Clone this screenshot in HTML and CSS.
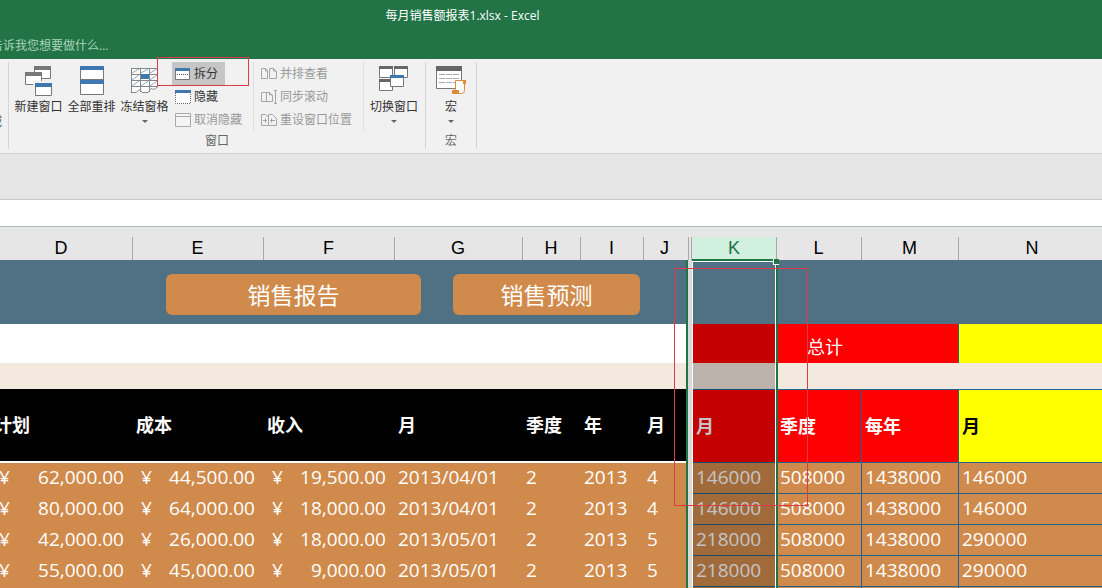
FILE: index.html
```html
<!DOCTYPE html>
<html lang="zh-CN">
<head>
<meta charset="utf-8">
<title>每月销售额报表1.xlsx - Excel</title>
<link rel="stylesheet" href="styles.css">
</head>
<body>
<header class="titlebar">
  <h1 class="title">每月销售额报表1.xlsx - Excel</h1>
  <button class="tellme">告诉我您想要做什么...</button>
</header>

<nav class="ribbon">
  <div class="zoom-tail"><span>域</span></div>
  <section class="group group-window">
    <div class="tools">
      <button class="big">
        <svg width="32" height="34" viewBox="0 0 32 34"><g fill="#fff" stroke="#777"><path d="M11.500 3.500h16v12h-16z"/><path d="M2.500 9.500h16v12h-16z"/></g><path fill="#777" d="M11 3h17v4H11zM2 9h17v4H2z"/><path fill="#fff" stroke="#f0f0f0" stroke-width="2" d="M11 19h19v15H11z"/><path fill="#fff" stroke="#777" d="M12.500 20.500h16v12h-16z"/><path fill="#3f78ae" d="M12 20h17v4H12z"/></svg>
        <span>新建窗口</span>
      </button>
      <button class="big">
        <svg width="32" height="34" viewBox="0 0 32 34"><path fill="#fff" stroke="#777" d="M4.500 3.500h23v28h-23z"/><path fill="#3f78ae" d="M4 3h24v4H4zM4 17h24v4H4z"/><path stroke="#777" d="M4 16.500h24"/></svg>
        <span>全部重排</span>
      </button>
      <button class="big">
        <svg width="32" height="34" viewBox="0 0 32 34"><path fill="#fff" d="M2 5h27v19l-7 5H2z"/><path fill="none" stroke="#888" d="M2.500 5v24M11.500 5v24M20.500 5v24M28.500 5v19M2 5.500h27M2 11.500h27M2 17.500h27M2 23.500h27M2 29.500h5l4-3 2 3h6l3-4 3 1 4-3"/><path stroke="#8da7bf" d="M3 10l7-4M12 10l7-4M21 10l7-4M3 17l7-5M3 23l7-5M21 17l7-5M12 23l7-5M21 23l7-5"/><path fill="#3f78ae" d="M12 11h8v5h-8z"/></svg>
        <span>冻结窗格</span><i class="caret"></i>
      </button>
      <div class="stack">
        <button class="small on">
          <svg width="16" height="14" viewBox="0 0 16 14"><path fill="#fff" stroke="#777" d="M.5 1.500h14v11H.5z"/><path fill="#3f78ae" d="M0 1h15v3H0z"/><path stroke="#555" stroke-dasharray="1 1" d="M2 7.500h11"/></svg>
          <span>拆分</span>
        </button>
        <button class="small">
          <svg width="16" height="14" viewBox="0 0 16 14"><path fill="#fff" d="M0 0h16v14H0z"/><path fill="none" stroke="#666" stroke-dasharray="1 1" d="M.5 3v10.500h15V3"/><path fill="#3f78ae" d="M0 0h16v3H0z"/></svg>
          <span>隐藏</span>
        </button>
        <button class="small" disabled>
          <svg width="16" height="14" viewBox="0 0 16 14"><path fill="#f4f4f4" stroke="#aaa" d="M.5.500h15v13H.5zM0 3.500h16"/></svg>
          <span>取消隐藏</span>
        </button>
      </div>
      <div class="stack second">
        <button class="small" disabled>
          <svg width="16" height="14" viewBox="0 0 16 14"><path fill="none" stroke="#a5a5a5" d="M.5 1.500h4l2 2v8h-6zM8.500 1.500h4l3 3v7h-7zM4.500 1v3h2M12.500 1v3h3"/></svg>
          <span>并排查看</span>
        </button>
        <button class="small" disabled>
          <svg width="16" height="14" viewBox="0 0 16 14"><path fill="none" stroke="#a5a5a5" d="M.5 2.500h5v9h-5zM5.500 2.500h3l3 3v6h-6M8.500 2v3h3M13 .5h3M13 13.500h3M14.500 1v12"/></svg>
          <span>同步滚动</span>
        </button>
        <button class="small" disabled>
          <svg width="16" height="14" viewBox="0 0 16 14"><path fill="none" stroke="#a5a5a5" d="M.5 1.500h4l3 3v8h-7zM7.500 4.500v-3h4l4 4v7h-8M2 7.500h4M9 7.500h5M4.500 5.500v4M10.500 5.500v4"/></svg>
          <span>重设窗口位置</span>
        </button>
      </div>
      <button class="big switch">
        <svg width="32" height="34" viewBox="0 0 32 34"><g fill="#fff" stroke="#777"><path d="M1.500 3.500h13v11h-13z"/><path d="M16.500 3.500h13v11h-13z"/><path d="M1.500 16.500h13v11h-13z"/></g><path fill="#666" d="M1 3h14v3H1zM16 3h14v3H16zM1 16h14v3H1z"/><path fill="#fff" stroke="#777" d="M12.500 12.500h13v11h-13z"/><path fill="#3f78ae" d="M12 12h14v3H12z"/></svg>
        <span>切换窗口</span><i class="caret"></i>
      </button>
    </div>
    <div class="caption">窗口</div>
  </section>
  <section class="group group-macro">
    <div class="tools">
      <button class="big">
        <svg width="32" height="34" viewBox="0 0 32 34"><path fill="#fff" stroke="#777" d="M1.500 3.500h25v22h-25z"/><path fill="#666" d="M1 3h26v5H1z"/><path stroke="#aaa" stroke-dasharray="6 1" d="M4 11.500h20M4 15.500h20M4 19.500h16"/><path fill="#fff" stroke="#e08a3c" d="M20.500 17.500h9v10q0 3-3 3h-9v-3h3z"/><path fill="#e08a3c" d="M17 27h7v4h-5q-2 0-2-4zM28 17h3v4h-3z"/></svg>
        <span>宏</span><i class="caret"></i>
      </button>
    </div>
    <div class="caption">宏</div>
  </section>
  <div class="mark mark-split"></div>
</nav>
<div class="spacer"></div>
<div class="formula"></div>

<main class="sheet">
  <table class="cells">
    <colgroup><col class="cD"><col class="cE"><col class="cE"><col class="cG"><col class="cH"><col class="cI"><col class="cJ"><col class="cS"><col class="cK"><col class="cL"><col class="cM"><col></colgroup>
    <thead>
      <tr class="letters"><th>D</th><th>E</th><th>F</th><th>G</th><th>H</th><th>I</th><th>J</th><th class="edge"></th><th class="picked">K</th><th>L</th><th>M</th><th>N</th></tr>
    </thead>
    <tbody>
      <tr class="banner"><td colspan="7"><div class="links"><button class="report">销售报告</button><button class="forecast">销售预测</button></div></td><td></td><td></td><td colspan="3"></td></tr>
      <tr class="total"><td colspan="7"></td><td></td><td colspan="3" class="red">总计</td><td class="yellow line"></td></tr>
      <tr class="gap"><td colspan="12"></td></tr>
      <tr class="heads"><th>计划</th><th>成本</th><th>收入</th><th>月</th><th>季度</th><th>年</th><th>月</th><th></th><th class="red">月</th><th class="red">季度</th><th class="red line">每年</th><th class="yellow line">月</th></tr>
      <tr class="data"><td><div class="money"><span>¥</span><span>62,000.00</span></div></td><td><div class="money"><span>¥</span><span>44,500.00</span></div></td><td><div class="money"><span>¥</span><span>19,500.00</span></div></td><td>2013/04/01</td><td>2</td><td>2013</td><td>4</td><td></td><td class="rule">146000</td><td class="rule">508000</td><td class="rule line">1438000</td><td class="rule line">146000</td></tr>
      <tr class="data"><td><div class="money"><span>¥</span><span>80,000.00</span></div></td><td><div class="money"><span>¥</span><span>64,000.00</span></div></td><td><div class="money"><span>¥</span><span>18,000.00</span></div></td><td>2013/04/01</td><td>2</td><td>2013</td><td>4</td><td></td><td class="rule">146000</td><td class="rule">508000</td><td class="rule line">1438000</td><td class="rule line">146000</td></tr>
      <tr class="data"><td><div class="money"><span>¥</span><span>42,000.00</span></div></td><td><div class="money"><span>¥</span><span>26,000.00</span></div></td><td><div class="money"><span>¥</span><span>18,000.00</span></div></td><td>2013/05/01</td><td>2</td><td>2013</td><td>5</td><td></td><td class="rule">218000</td><td class="rule">508000</td><td class="rule line">1438000</td><td class="rule line">290000</td></tr>
      <tr class="data"><td><div class="money"><span>¥</span><span>55,000.00</span></div></td><td><div class="money"><span>¥</span><span>45,000.00</span></div></td><td><div class="money"><span>¥</span><span>9,000.00</span></div></td><td>2013/05/01</td><td>2</td><td>2013</td><td>5</td><td></td><td class="rule">218000</td><td class="rule">508000</td><td class="rule line">1438000</td><td class="rule line">290000</td></tr>
      <tr class="data"><td></td><td></td><td></td><td></td><td></td><td></td><td></td><td></td><td></td><td></td><td class="line"></td><td class="line"></td></tr>
    </tbody>
  </table>
  <div class="split"></div>
  <div class="selection"><div class="shade"></div></div>
  <div class="handle"></div>
  <div class="mark mark-column"></div>
</main>
</body>
</html>
```

FILE: styles.css
```css
* { box-sizing: border-box; }
body {
  margin: 0;
  height: 100vh;
  overflow: hidden;
  display: flex;
  flex-direction: column;
  background: #e6e6e6;
  color: #444;
  font: 12px/16px "Open Sans", "Noto Sans CJK SC", sans-serif;
}
button {
  margin: 0;
  padding: 0;
  border: 0;
  background: none;
  color: inherit;
  font: inherit;
  white-space: nowrap;
}

/* Title bar */
.titlebar { flex: none; height: 59px; background: #227447; color: #fff; overflow: hidden; }
.title {
  margin: 0;
  padding: 8px 177px 0 0;
  height: 38px;
  font-size: 12px;
  font-weight: 400;
  text-align: center;
}
.tellme { display: block; margin-left: -9px; color: #a9d3b9; }

/* Ribbon */
.ribbon {
  position: relative;
  flex: none;
  display: flex;
  height: 95px;
  padding: 3px 0 4px;
  background: #f1f1f1;
  border-bottom: 1px solid #d2d2d2;
}
.zoom-tail { width: 9px; border-right: 1px solid #d4d4d4; padding-top: 52px; }
.zoom-tail span { display: block; margin-left: -10px; width: 12px; }
.group { display: flex; flex-direction: column; border-right: 1px solid #d4d4d4; }
.group-window { width: 417px; }
.group-macro { width: 51px; align-items: center; }
.tools { display: flex; height: 73px; padding-left: 3px; }
.group-macro .tools { padding: 0; }
.big { display: flex; flex-direction: column; align-items: center; width: 53px; color: #333; }
.big svg { margin-top: 1px; }
.big span { margin-top: 2px; }
.switch { width: 60px; }
.caret {
  margin-top: 5px;
  border: 3px solid transparent;
  border-top-color: #666;
  border-bottom: 0;
}
.stack { display: flex; flex-direction: column; align-items: flex-start; width: 82px; height: 69px; }
.second { width: 111px; padding-left: 7px; border-left: 1px solid #dedede; border-right: 1px solid #dedede; }
.stack:not(.second) { padding-left: 1px; }
.small { display: flex; align-items: center; gap: 3px; height: 23px; padding: 0 7px 0 3px; color: #333; }
.second .small { padding: 0; }
.small:disabled { color: #999; }
.small.on { background: #c6c6c6; }
.caption { text-align: center; color: #666; }

.spacer { flex: none; height: 46px; border-bottom: 1px solid #c9c9c9; }
.formula { flex: none; height: 27px; background: #fff; border-bottom: 1px solid #b2b9b5; }

/* Worksheet */
.sheet { position: relative; flex: 1; min-height: 0; overflow: hidden; }
.cells {
  table-layout: fixed;
  width: calc(100% + 14px);
  margin-left: -10px;
  border-collapse: separate;
  border-spacing: 0;
  color: #fff;
}
.cD { width: 142px; }
.cE { width: 131px; }
.cG { width: 128px; }
.cH { width: 58px; }
.cI { width: 63px; }
.cJ { width: 43px; }
.cS { width: 6px; }
.cK { width: 84px; }
.cL { width: 85px; }
.cM { width: 97px; }
.cells td, .cells th { padding: 0; text-align: left; white-space: nowrap; }
.cells .letters th {
  height: 33px;
  padding-top: 9px;
  background: linear-gradient(#a8a8a8, #a8a8a8) left bottom / 1px 23px no-repeat #e6e6e6;
  color: #000;
  font: 18px/24px "Liberation Sans", sans-serif;
  text-align: center;
}
.cells .letters .edge {
  background:
    linear-gradient(#a8a8a8, #a8a8a8) 2px bottom / 1px 23px no-repeat,
    linear-gradient(#a8a8a8, #a8a8a8) right bottom / 1px 23px no-repeat #e6e6e6;
}
.cells .letters .picked { background: linear-gradient(#d2f0df, #d2f0df) bottom / 100% 23px no-repeat #e6e6e6; color: #217346; }
.banner td { height: 64px; background: #507083; vertical-align: top; }
.links { display: flex; gap: 32px; padding: 14px 0 0 176px; }
.links button {
  width: 255px;
  height: 41px;
  border-radius: 6px;
  background: #d08a4b;
  font-size: 23px;
  line-height: 32px;
}
.links .forecast { width: 187px; }
.total td { height: 39px; padding-top: 6px; background: #fff; font-size: 18px; line-height: 24px; }
.cells .total .red { text-align: center; }
.gap td { height: 26px; background: #f3e9de; }
.heads th {
  height: 74px;
  background: #000;
  border-bottom: 2px solid #fff;
  font-size: 18px;
  line-height: 24px;
}
.cells .heads th { padding-left: 4px; }
.cells .red { background: #f00; }
.cells .yellow { background: #ff0; color: #000; }
.heads .red, .heads .yellow { border-top: 1px solid #1f6391; border-bottom: 1px solid #1f6391; }
.data td { height: 31px; background: #d08a4b; font-size: 19px; line-height: 28px; vertical-align: top; }
.cells .data td { padding-left: 4px; }
.cells .data td:nth-child(-n+3) { padding-left: 0; }
.cells .line { border-left: 1px solid #1f6391; }
.cells .heads .line, .cells .data .line { padding-left: 3px; }
.data .rule { border-bottom: 1px solid #1f6391; }
.money { display: flex; justify-content: space-between; padding: 0 8px 0 9px; }

/* Overlays on the grid */
.split {
  position: absolute;
  top: 33px;
  bottom: 0;
  left: 686px;
  width: 6px;
  background: #d9d9d9;
  border-left: 2px solid #217346;
}
.selection {
  position: absolute;
  top: 32px;
  bottom: 0;
  left: 692px;
  width: 86px;
  border-top: 2px solid #217346;
  border-right: 2px solid #217346;
}
.shade {
  height: 100%;
  border: 1px solid #fff;
  border-bottom: 0;
  background: linear-gradient(#0000003b, #0000003b) 0 62px no-repeat;
}
.handle {
  position: absolute;
  top: 32px;
  left: 773px;
  width: 6px;
  height: 6px;
  background: #217346;
  border-left: 1px solid #fff;
  border-bottom: 1px solid #fff;
}
.mark { position: absolute; border: 1px solid #dc3c46; pointer-events: none; }
.mark-split { top: -2px; left: 157px; width: 92px; height: 29px; }
.mark-column { top: 41px; left: 674px; width: 134px; height: 238px; }
```
